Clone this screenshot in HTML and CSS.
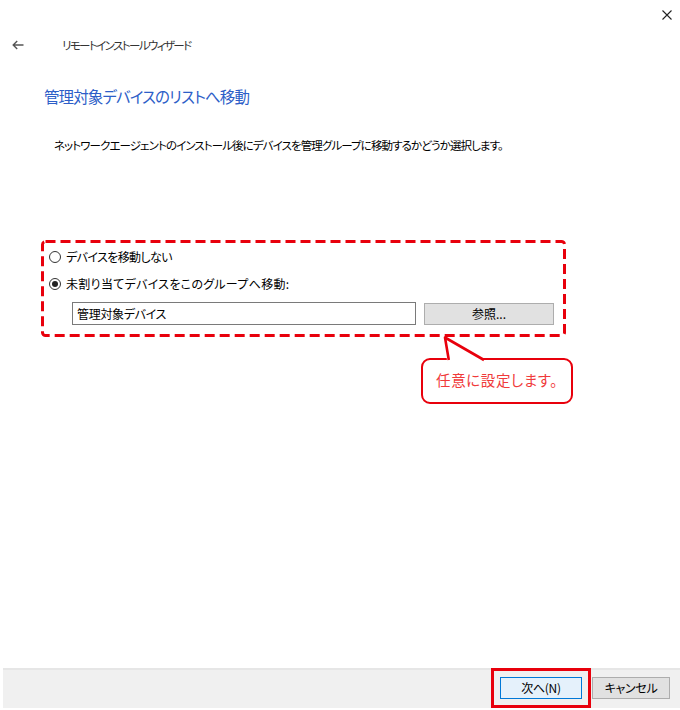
FILE: index.html
```html
<!DOCTYPE html>
<html lang="ja">
<head>
<meta charset="utf-8">
<title>リモートインストールウィザード</title>
<link rel="stylesheet" href="styles.css">
</head>
<body>
<div class="window">
  <div class="topbar">
    <span class="close" aria-label="閉じる">
      <svg width="10" height="10" viewBox="0 0 10 10"><path d="M0.5 0.5 L9.5 9.5 M9.5 0.5 L0.5 9.5" stroke="#222" stroke-width="1.1" fill="none"/></svg>
    </span>
  </div>
  <div class="nav">
    <span class="back">
      <svg width="12" height="10" viewBox="0 0 12 10"><path d="M11.5 5 H1.2 M5.2 1 L1.2 5 L5.2 9" stroke="#555" stroke-width="1.4" fill="none"/></svg>
    </span>
    <span class="wizard-title">リモートインストールウィザード</span>
  </div>
  <h1 class="heading">管理対象デバイスのリストへ移動</h1>
  <p class="desc">ネットワークエージェントのインストール後にデバイスを管理グループに移動するかどうか選択します。</p>

  <div class="options">
    <svg class="dash-frame" width="525" height="97" viewBox="0 0 525 97">
      <rect x="1.5" y="1.5" width="522" height="94" rx="3" ry="3" fill="none" stroke="#e8000c" stroke-width="3" stroke-dasharray="10 5"/>
    </svg>
    <div class="opt-row">
      <span class="radio"></span>
      <span class="opt-label">デバイスを移動しない</span>
    </div>
    <div class="opt-row">
      <span class="radio checked"></span>
      <span class="opt-label wide">未割り当てデバイスをこのグループへ移動:</span>
    </div>
    <div class="group-row">
      <div class="textbox">管理対象デバイス</div>
      <div class="browse">参照...</div>
    </div>
  </div>

  <div class="spacer"></div>

  <div class="footer">
    <div class="btn primary">次へ(N)</div>
    <div class="btn">キャンセル</div>
  </div>

  <div class="callout">
    <div class="callout-box">任意に設定します。</div>
    <svg class="callout-tail" width="50" height="30" viewBox="440 334 50 30">
      <polygon points="447,361.5 445,337.5 486,361.5" fill="#fff"/>
      <polyline points="448.8,360 445,337.5 484,360" fill="none" stroke="#e8000c" stroke-width="2.6" stroke-linejoin="round"/>
    </svg>
  </div>
</div>
</body>
</html>
```
FILE: styles.css
```css
* { box-sizing: border-box; }
html, body { margin: 0; padding: 0; background: #fff; }
body {
  font-family: "Noto Sans CJK JP", "Noto Sans", sans-serif;
  font-feature-settings: "palt";
  color: #000;
}
.window {
  position: relative;
  width: 680px;
  height: 710px;
  display: flex;
  flex-direction: column;
  overflow: hidden;
}
.topbar {
  height: 30px;
  display: flex;
  justify-content: flex-end;
  align-items: center;
  padding-right: 8px;
}
.close { display: flex; width: 10px; height: 10px; }
.nav {
  height: 30px;
  display: flex;
  align-items: center;
  padding-left: 12px;
}
.back { display: flex; width: 12px; height: 10px; }
.wizard-title {
  margin-left: 38px;
  font-size: 11.5px;
  color: #333;
  letter-spacing: -1.6px;
}
.heading {
  margin: 24px 0 0 44px;
  height: 24px;
  line-height: 24px;
  font-size: 15.5px;
  font-weight: normal;
  color: #2d5ec8;
  letter-spacing: -0.9px;
}
.desc {
  margin: 28px 0 0 54px;
  height: 18px;
  line-height: 18px;
  font-size: 11.5px;
  letter-spacing: -0.9px;
}
.options {
  position: relative;
  margin: 86px 0 0 41px;
  width: 525px;
  height: 97px;
  padding: 8px 12px 12px 8px;
  display: flex;
  flex-direction: column;
  gap: 9px;
}
.dash-frame {
  position: absolute;
  left: 0;
  top: 0;
}
.opt-row {
  height: 18px;
  display: flex;
  align-items: center;
  gap: 5px;
}
.radio {
  width: 12px;
  height: 12px;
  border: 1px solid #333;
  border-radius: 50%;
  background: #fff;
  display: flex;
  align-items: center;
  justify-content: center;
}
.radio.checked::after {
  content: "";
  width: 6px;
  height: 6px;
  border-radius: 50%;
  background: #222;
}
.opt-label {
  font-size: 12px;
  letter-spacing: -0.6px;
  line-height: 18px;
}
.opt-label.wide { letter-spacing: 0.3px; }
.group-row {
  display: flex;
  align-items: center;
  gap: 8px;
  padding-left: 23px;
}
.textbox {
  width: 344px;
  height: 23px;
  border: 1px solid #7a7a7a;
  background: #fff;
  font-size: 12px;
  line-height: 21px;
  padding-left: 4px;
  letter-spacing: -0.3px;
}
.browse {
  width: 130px;
  height: 22px;
  border: 1px solid #adadad;
  background: #e1e1e1;
  font-size: 12px;
  line-height: 20px;
  text-align: center;
}
.spacer { flex: 1; }
.footer {
  height: 40px;
  margin: 0 0 2px 3px;
  background: #f0f0f0;
  border-top: 2px solid #e6e6e6;
  display: flex;
  justify-content: flex-end;
  align-items: flex-start;
  padding: 7px 10px 0 0;
  gap: 10px;
}
.btn {
  height: 22px;
  width: 78px;
  border: 1px solid #adadad;
  background: #e1e1e1;
  font-size: 12px;
  line-height: 20px;
  text-align: center;
  letter-spacing: -0.3px;
}
.btn.primary {
  width: 82px;
  border-color: #0078d7;
  background: #e5f1fb;
  outline: 3px solid #e8000c;
  outline-offset: 6px;
}
.callout {
  position: absolute;
  left: 0;
  top: 0;
  width: 0;
  height: 0;
}
.callout-box {
  position: absolute;
  left: 421px;
  top: 358px;
  width: 152px;
  height: 46px;
  border: 2.6px solid #e8000c;
  border-radius: 9px;
  background: #fff;
  color: #f03a3a;
  font-size: 14.5px;
  line-height: 40px;
  text-align: center;
  letter-spacing: 0.6px;
}
.callout-tail {
  position: absolute;
  left: 440px;
  top: 334px;
}
```
